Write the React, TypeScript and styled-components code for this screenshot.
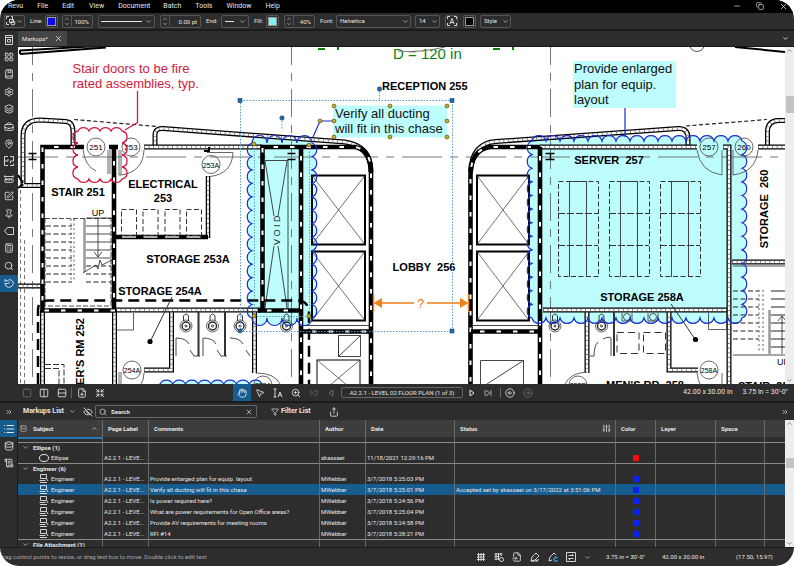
import React from "react";
import styled, { createGlobalStyle, css } from "styled-components";
import {
  BookMarked, BriefcaseBusiness, Calculator, ChevronDown, ChevronUp, ChevronsRight, CircleArrowLeft, CircleArrowRight,
  Columns2, Copy, Database, EyeOff, FileInput, FilePlus, Filter, Hand, Layers, LayoutGrid,
  List, MapPin, Minus, MousePointer2, Pin, Rows2, RulerDimensionLine, ScrollText, Search,
  Settings, Share, SkipBack, SkipForward, SlidersVertical, Square, SquareMinus, SquarePen, X, ZoomIn, Shrink,
} from "lucide-react";

const ink = "#e6e6e6";
const chrome = "#2d2d2d";
const edge = "#1b1b1b";
const accent = "#175c8f";
const cyan = "#bdfdfd";
const blue = "#1a2fd0";

const Global = createGlobalStyle`
  * { box-sizing: border-box; }
  body { margin: 0; background: #fff; font-family: Roboto, sans-serif; font-size: 7px; color: ${ink}; }
  button, input, select { font: inherit; color: inherit; margin: 0; padding: 0; border: 0; background: none; }
`;

const Shell = styled.div`
  display: flex; flex-direction: column; min-height: 100vh; background: ${chrome};
  border-radius: 19px; overflow: hidden; line-height: 1;
`;
const MenuBar = styled.nav`
  display: flex; align-items: center; height: 13px; background: #000; padding: 0 6px 0 8px;
`;
const MenuItem = styled.button<{ $gap: number }>`margin-right: ${p => p.$gap}px; white-space: nowrap;`;
const WindowButtons = styled.div`
  margin-left: auto; display: flex; gap: 15px;
  button { display: flex; }
`;
const Toolbar = styled.div`
  display: flex; align-items: center; height: 18px; padding: 0 4px; border-bottom: 2px solid ${edge}; font-size: 6px;
`;
const FieldLabel = styled.label<{ $w: number }>`
  width: ${p => p.$w}px; margin-left: 5px; flex: none; white-space: nowrap;
`;
const Box = styled.div<{ $w: number; $ml?: number }>`
  display: flex; align-items: center; height: 13px; width: ${p => p.$w}px; margin-left: ${p => p.$ml ?? 4}px;
  border: 1px solid #555; border-radius: 2px; flex: none; overflow: hidden;
  > svg { flex: none; margin: 0 1px; }
`;
const IconBox = styled(Box)`justify-content: center; > svg { margin: 0; }`;
const Value = styled.input`flex: 1; min-width: 0; height: 11px; text-align: right; padding-right: 3px;`;
const Pick = styled.select`
  appearance: none; flex: 1; min-width: 0; height: 11px; padding-left: 3px; outline: 0;
  option { color: #000; }
`;
const Swatch = styled.button<{ $c: string }>`
  width: 9px; height: 9px; margin: 0 auto; background: ${p => p.$c}; border: 1px solid #999;
`;
const Stepper = styled.div`
  display: flex; flex-direction: column; width: 9px; flex: none; border-right: 1px solid #555;
  button { display: flex; justify-content: center; height: 5px; }
`;
const Main = styled.div`display: grid; grid-template-columns: 18px minmax(0, 1fr); flex: 1;`;
const SideTools = styled.div`
  display: grid; grid-auto-rows: 1fr; height: 261px;
`;
const IconButton = styled.button<{ $on?: boolean }>`
  display: flex; align-items: center; justify-content: center;
  ${p => p.$on && css`background: ${accent};`}
`;
const Workspace = styled.main`display: flex; flex-direction: column; min-width: 0;`;
const TabStrip = styled.div`
  display: flex; align-items: stretch; justify-content: space-between; height: 16px; border-bottom: 1px solid ${edge};
  padding-right: 5px;
`;
const Tab = styled.button`
  display: flex; align-items: center; gap: 6px; width: 49px; padding-left: 4px; background: #454545; font-size: 6px;
`;
const CanvasRow = styled.div`
  display: flex; flex: 1; background: #fff;
  > svg { display: block; flex: 1; min-width: 0; }
`;
const ScrollTrack = styled.div<{ $top: number; $size: number }>`
  width: 9px; flex: none; background: #ededed; color: #444; display: flex; flex-direction: column; align-items: center;
  svg:last-child { margin-top: auto; }
  i { width: 8px; height: ${p => p.$size}px; margin-top: ${p => p.$top}px; background: #c3c3c3; }
`;
const NavBar = styled.div`
  display: flex; align-items: center; height: 17px; padding: 0 6px 0 3px; background: ${chrome};
`;
const NavButton = styled(IconButton)<{ $dim?: boolean; $w?: number }>`
  width: ${p => p.$w ?? 18}px; height: 17px; flex: none; opacity: ${p => (p.$dim ? 0.35 : 1)};
`;
const NavGroup = styled.div<{ $w?: number }>`
  display: flex; align-items: center; flex: none; ${p => p.$w && css`width: ${p.$w}px;`}
`;
const Rule = styled.span`width: 1px; height: 10px; background: #666; margin: 0 3px;`;
const PageBox = styled.button`
  width: 122px; height: 11px; margin: 0 2px; border: 1px solid #666; border-radius: 2px; font-size: 6px; white-space: nowrap;
`;
const Readouts = styled.div<{ $gap: number }>`
  display: flex; gap: ${p => p.$gap}px; margin-left: auto; white-space: nowrap; font-size: 7px;
`;
const Panel = styled.section`border-top: 2px solid ${edge};`;
const PanelHead = styled.header`display: flex; align-items: center; height: 17px;`;
const PanelTitle = styled.button`
  display: flex; align-items: center; gap: 5px; width: 58px; margin-left: 5px; font-weight: 700; white-space: nowrap;
`;
const SearchBox = styled.label`
  display: flex; align-items: center; gap: 4px; width: 162px; height: 13px; padding: 0 3px; border: 1px solid #666; border-radius: 2px;
  input { flex: 1; min-width: 0; outline: 0; font-size: 6px; }
  input::placeholder { color: ${ink}; opacity: 1; font-weight: 700; }
`;
const FilterButton = styled.button`
  display: flex; align-items: center; gap: 2px; margin: 0 18px 0 14px; font-weight: 700; white-space: nowrap;
`;
const PanelBody = styled.div`
  display: grid; grid-template-columns: 18px minmax(0, 1fr) 9px; height: 127px; overflow: hidden;
`;
const PanelTabs = styled.div`
  display: grid; grid-auto-rows: 17px; border-right: 1px solid ${edge};
`;
const TableWrap = styled.div`overflow: hidden; min-width: 0;`;
const Table = styled.table`
  width: 100%; table-layout: fixed; border-collapse: separate; border-spacing: 0; font-size: 6px;
  td, th { padding: 0; text-align: left; white-space: nowrap; overflow: hidden; border-right: 1px solid #686868; line-height: 8px; }
  td { height: 11px; padding-left: 1px; }
  th { height: 17px; padding-left: 5px; background: #3d3d3d; font-weight: 700; }
  th:first-child { padding-left: 2px; }
  td:last-child, th:last-child { border-right: 0; }
`;
const SpacerRow = styled.tr`
  && td { height: 5px; line-height: 0; }
  td:first-child { border-top: 2px solid #2478b5; }
`;
const GroupRow = styled.tr`
  && td { height: 10px; border-top: 1px solid #8a8a8a; font-weight: 700; }
`;
const ItemRow = styled.tr<{ $on?: boolean }>`
  ${p => p.$on && css`background: ${accent};`}
`;
const CellFlex = styled.div<{ $pad?: number; $gap?: number }>`
  display: flex; align-items: center; gap: ${p => p.$gap ?? 2}px; padding-left: ${p => p.$pad ?? 0}px; padding-right: 4px;
  svg { flex: none; }
`;
const Push = styled.span`margin-left: auto; display: flex;`;
const ColorDot = styled.span<{ $c: string }>`display: block; width: 6px; height: 6px; margin: 1px auto 0; background: ${p => p.$c};`;
const StatusBar = styled.footer`
  display: flex; align-items: center; height: 19px; border-top: 1px solid ${edge}; padding: 0 20px 0 3px; color: #a9a9a9;
  font-size: 6px;
`;
const StatusTools = styled.div`
  display: flex; gap: 8px; margin-left: auto; margin-right: 15px; color: ${ink}; align-items: center;
`;
const StatusText = styled.span<{ $w: number }>`width: ${p => p.$w}px; white-space: nowrap; color: ${ink};`;

/* ---------- floor plan ---------- */

const SolidWall = ({ d }: { d: string }) => (
  <g fill="none">
    <path d={d} stroke="#000" strokeWidth="4.6" />
    <path d={d} stroke="#fff" strokeWidth="2" strokeDasharray="4.5 12" strokeDashoffset="-9" />
  </g>
);
const HatchWall = ({ d, w = 5 }: { d: string; w?: number }) => (
  <g fill="none">
    <path d={d} stroke="#000" strokeWidth={w} />
    <path d={d} stroke="#fff" strokeWidth={w - 2.6} />
    <path d={d} stroke="#555" strokeWidth={w - 2.6} strokeDasharray="0.7 4" />
  </g>
);

function cloud(x: number, y: number, w: number, h: number, step: number) {
  const nx = Math.round(w / step);
  const ny = Math.round(h / step);
  const dx = w / nx;
  const dy = h / ny;
  const r = step * 0.53;
  const arc = (ax: number, ay: number, n: number) => `a${r} ${r} 0 0 1 ${ax} ${ay}`.repeat(n);
  return `M${x} ${y}${arc(dx, 0, nx)}${arc(0, dy, ny)}${arc(-dx, 0, nx)}${arc(0, -dy, ny)}z`;
}

const Door = ({ x, y, n }: { x: number; y: number; n: string }) => (
  <g>
    <circle cx={x} cy={y} r="9" fill="none" stroke="#444" strokeWidth=".8" />
    <text x={x} y={y + 3} fontSize={n.length > 3 ? 7 : 8} textAnchor="middle">{n}</text>
  </g>
);
const Toilet = ({ x, y }: { x: number; y: number }) => (
  <g fill="none" stroke="#222" strokeWidth=".9">
    <circle cx={x} cy={y} r="6" strokeWidth=".7" />
    <circle cx={x} cy={y} r="4" strokeWidth="1.4" />
    <circle cx={x} cy={y} r="1" />
    <path d={`M${x - 2.5} ${y - 5}v-5q2.5 -4 5 0v5`} />
  </g>
);
const Crossed = ({ x, y, w, h, s = 2 }: { x: number; y: number; w: number; h: number; s?: number }) => (
  <g fill="none" stroke="#000">
    <rect x={x} y={y} width={w} height={h} strokeWidth={s} />
    <path d={`M${x} ${y}l${w} ${h}M${x + w} ${y}l${-w} ${h}`} strokeWidth=".7" stroke="#333" />
  </g>
);
const Label = ({ x, y, children, start }: { x: number; y: number; children: string; start?: boolean }) => (
  <text x={x} y={y} fontWeight="700" fontSize="11" textAnchor={start ? "start" : "middle"} xmlSpace="preserve">{children}</text>
);
const treads = (x: number, w: number, y: number, n: number) =>
  Array.from({ length: n }, (_, i) => `M${x} ${y + i * 8}h${w}`).join("");

const yellowHandles = [
  [334, 106], [390, 106], [447, 106], [334, 121], [447, 121], [334, 137], [390, 137], [447, 137],
  [320, 121], [254, 144], [309, 145], [254, 316], [309, 316],
];

const FloorPlan = () => (
  <svg viewBox="18 47 767 337" preserveAspectRatio="xMinYMin slice" fontFamily='"Liberation Sans", Arial, sans-serif' role="img" aria-label="Level 02 floor plan">
    <rect x="18" y="47" width="768" height="337" fill="#fff" />
    <path d={cloud(252, 143, 60, 175, 13.5)} fill={cyan} />
    <path d={cloud(532, 141, 210, 177, 13.7)} fill={cyan} />
    <path d={cloud(160, 384, 102, 27, 13.5)} fill={cyan} stroke={blue} strokeWidth="1.2" />

    <g stroke="#666" strokeWidth=".9" fill="none">
      <path d="M32.5 47v337M291.5 47v337M550.5 47v337" strokeDasharray="28 8 8 8" strokeDashoffset="10" />
      <path d="M18 157H786" strokeDasharray="40 8 8 8" />
      <path d="M74 119.5L157 126.5M686 126L767 119.5" stroke="#222" strokeDasharray="4 2.5" strokeWidth="1.2" />
      <path d="M20.5 190v194M24.5 240v144" strokeDasharray="4 3" />
    </g>
    <path d="M20 50.500L98 46M20 54L106 47.500M735 47L786 52M20 50v4" stroke="#000" strokeWidth="2" fill="none" />
    <path d="M28.500 153.500h8M28.500 159.500h8M32.500 153.500v6M287.500 153.500h8M287.500 159.500h8M545.500 153.500h9M545.500 159.500h9M550.500 153.500v6" stroke="#000" strokeWidth="1.3" />
    <circle cx="697" cy="44" r="7.500" fill="none" stroke="#555" />

    {/* curved party walls */}
    <HatchWall d="M42 185.500H23V136Q23 120 40 120L66 121.500Q73 122 73 131V146" />
    <HatchWall d="M155 146V135Q155 128 163 128.500L345 142Q371 146 371 172" />
    <HatchWall d="M470.500 172Q472 143 496 141.500L678 128.500Q688 128 688 138V146" />
    <HatchWall d="M767.500 146V131Q768 121 778 120.500H787" />
    <path d="M18 175l5 8M18 188l5 -4" stroke="#000" strokeWidth="2" />

    {/* hatched partitions */}
    <HatchWall d="M144 147H262" />
    <HatchWall d="M540 147H697" />
    <HatchWall d="M758 147H787" />
    <HatchWall d="M208 176V238" w={4.5} />
    <path d="M204 151h5v-4" stroke="#000" strokeWidth="2" fill="none" />
    <path d="M116 237H208" stroke="#000" strokeWidth="4.500" />
    <path d="M117 237H208" stroke="#aaa" strokeWidth="2" strokeDasharray="14 7.500" strokeDashoffset="-5" />
    <HatchWall d="M18 286H41" />
    <HatchWall d="M116 310H260" />
    <HatchWall d="M42.500 310V384" />
    <HatchWall d="M114.500 310V384" />
    <HatchWall d="M171.500 312V370H144" />
    <HatchWall d="M254.500 312V373" />
    <HatchWall d="M543 310H729" />
    <HatchWall d="M587 312V373" />
    <HatchWall d="M669 312V370H698" />
    <HatchWall d="M723 147H729V384" />
    <HatchWall d="M732 262H787" />

    {/* structural walls */}
    <SolidWall d="M84 147H42.500V310.500H114V147" />
    <path d="M109 147h9" stroke="#000" strokeWidth="4.600" />
    <SolidWall d="M262.500 310V147H355Q371 150 371 172V384" />
    <SolidWall d="M258 310.500H301" />
    <SolidWall d="M301 147V384" />
    <SolidWall d="M303 331.500H371" />
    <SolidWall d="M540 147H490Q471 150 470.500 175V384" />
    <SolidWall d="M540 147V384" />
    <SolidWall d="M471 331.500H540" />

    {/* lift shafts */}
    <Crossed x={312} y={175.500} w={53} h={69} />
    <Crossed x={312} y={251.500} w={53} h={69} />
    <Crossed x={477} y={175.500} w={52} h={69} />
    <Crossed x={477} y={251.500} w={52} h={69} />
    <Crossed x={317} y={360} w={43} h={36} s={1} />
    <g stroke="#333" strokeWidth=".9" fill="none">
      <path d="M303 325.500H369M473 325.500H538M338.500 335.500h22v21h-22zl0 21L360.500 335.500M480.500 360.500h43v36M480.500 384V360.500M487 384L523.500 360.500" />
      <path d="M264 160.500H288V308M265 161L274 216M287 161L278 216M274 246L265 308M278 246L287 308" />
    </g>
    <text transform="translate(280 245) rotate(-90)" fontSize="9" fill="#222" xmlSpace="preserve">V O I D</text>

    {/* stair flights */}
    <g fill="none" stroke="#222" strokeWidth="1.200">
      <path d="M45 218.500H112M45 218V306H111V218" strokeWidth=".8" strokeDasharray="5 2" />
      <path d={treads(46, 26, 226, 8)} strokeDasharray="5 2.500" />
      <path d={treads(86, 25, 218, 6)} strokeWidth=".8" />
      <path d={treads(86, 25, 266, 3)} strokeDasharray="5 2.500" />
      <path d="M71 219V282M74 219V282" strokeDasharray="2 2.500" stroke="#777" />
      <path d="M84.500 219V272" stroke="#999" strokeWidth="2.500" />
      <path d="M98 218V257M94 252l4 5l4 -5M83 273L96 265l2 4l2 -9l2 5L112 260" strokeWidth=".8" />
      <path d={treads(733, 26, 291, 7)} strokeDasharray="5 2.500" />
      <path d={treads(771, 15, 291, 8)} strokeWidth="1" />
      <path d="M759 290V353M763 290V353" strokeDasharray="2 2.500" stroke="#777" />
      <path d="M769.500 310V354" stroke="#999" strokeWidth="2.500" />
      <path d="M733 355H786M782 354V316M778 321l4 -5l4 5M733 266H786" strokeWidth=".8" />
    </g>
    <text x="98" y="215.500" fontSize="9" textAnchor="middle">UP</text>
    <text x="777" y="365" fontSize="9">UP</text>

    {/* furniture */}
    <g fill="none" stroke="#333" strokeWidth="1">
      {[121.500, 143, 165, 186.500].map(x => <rect key={x} x={x} y="209.500" width="15" height="26" strokeDasharray="5 2.500" />)}
      {[558, 609, 660].map(x => (
        <g key={x}>
          <rect x={x + .5} y="181.500" width="40" height="95" strokeDasharray="5 2.500" />
          <path d={`M${x} 213.500h40M${x} 245.500h40`} strokeDasharray="7 2" />
          <path d={`M${x + 11.500} 181V277M${x + 28.500} 181V277M${x + 11} 181.500h17`} strokeWidth=".9" />
        </g>
      ))}
      <path d="M617 332.500h22v21h-22zM643.500 332.500h22v21h-22z" strokeDasharray="7 4" />
      <path d="M45 364.500h19V384M45 368.500h14V384" strokeDasharray="6 2" />
      <path d="M116 330H133.500V313M708.500 313v16.500h18v-16" strokeWidth=".8" />
      <path d="M198.500 312V356M225 312V356M614 312V356" strokeWidth="2" />
      <path d="M176 356V338q10 0 13 6M190 350l4 6h6M203 356V338q10 0 13 6M217 350l4 6h6M230 338q10 0 13 6M246 350l4 6M590 356h4q0 -10 4 -14M603 339q6 -3 8 -1V356" strokeWidth=".9" />
    </g>
    {[[186, 326], [212.500, 326], [240, 326], [286.500, 326], [555, 326], [601.500, 326]].map(([x, y]) => <Toilet key={x} x={x} y={y} />)}
    <g fill="none" stroke="#555">
      <circle cx="627" cy="317" r="3.500" /><circle cx="653" cy="317" r="3.500" />
      <path d="M622 313v8h10v-8M648 313v8h10v-8" />
    </g>

    {/* doors */}
    <g fill="none" stroke="#555" strokeWidth=".9">
      <path d="M83 150Q85 166 96 171M108 150v24M110 150v24M119 150v25h2v-25M144 150Q143 172 121 175M207 152.500H233Q232 174 210 176.500" />
      <path d="M697 150Q700 172 722 175V150M733 150V175Q756 172 758 150M144 373Q144 380 141 384M119 372v12M121 372v12M256 373Q275 373 280 384M565 384Q570 373 587 372M697 373Q698 380 700 384M722 373v11" />
    </g>
    <Door x={96} y={147} n="251" />
    <Door x={131} y={147} n="253" />
    <Door x={211} y={164.500} n="253A" />
    <Door x={132} y={370} n="254A" />
    <Door x={709} y={147} n="257" />
    <Door x={744} y={147} n="260" />
    <Door x={709} y={370} n="258A" />
    <Door x={578} y={385} n="252B" />
    <Door x={263} y={385} n="252A" />

    {/* overhead line */}
    <path d="M38 384V310Q38 300.500 48 300.500H298Q309 301 309 314V384" fill="none" stroke="#000" strokeWidth="2.500" strokeDasharray="11 6" />

    {/* room names */}
    <Label x={78} y={196}>STAIR 251</Label>
    <Label x={163} y={188}>ELECTRICAL</Label>
    <Label x={163} y={202}>253</Label>
    <Label x={188} y={263}>STORAGE 253A</Label>
    <Label x={160} y={295}>STORAGE 254A</Label>
    <Label x={382} y={90} start>RECEPTION 255</Label>
    <Label x={424} y={271}>LOBBY  256</Label>
    <Label x={609} y={164}>SERVER  257</Label>
    <Label x={642} y={301}>STORAGE 258A</Label>
    <Label x={645} y={389}>MEN'S RR  258</Label>
    <Label x={738} y={390} start>STAIR  259</Label>
    <g transform="translate(84 353) rotate(-90)"><Label x={0} y={0}>IER'S RM 252</Label></g>
    <g transform="translate(768 209) rotate(-90)"><Label x={0} y={0}>STORAGE  260</Label></g>
    <path d="M150 342L172 297M695 339L671 304" stroke="#333" />
    <circle cx="150" cy="341.500" r="2.600" /><circle cx="695.500" cy="339.500" r="2.600" />

    {/* markups */}
    <g fill="#0a820a">
      <text x="393" y="58.500" fontSize="15">D = 120 in</text>
      <path d="M318 48h7v2h-7zM337 47h2v3h-2zM493 48h7v2h-7zM512 47h2v3h-2z" />
    </g>
    <path d="M398 51Q420 53 445 47" fill="none" stroke="#777" />
    <g fill="none" stroke={blue} strokeWidth="1.200">
      <path d={cloud(252, 143, 60, 175, 13.5)} />
      <path d={cloud(532, 141, 210, 177, 13.7)} />
      <path d="M334 121H320L313 137M625 108V137" />
    </g>
    <g fill="none" stroke="#d21a3c" strokeWidth="1.300">
      <path d={cloud(78, 131, 44, 48, 11.500)} />
      <path d="M137.500 91V122.500L125 130" />
    </g>
    <g fill="#d21a3c" fontSize="13">
      <text x="72.500" y="73">Stair doors to be fire</text>
      <text x="72.500" y="88">rated assemblies, typ.</text>
    </g>
    <rect x="333" y="105.500" width="114" height="32" fill={cyan} />
    <rect x="573" y="61" width="103" height="47" fill={cyan} />
    <g fill="#111" fontSize="13">
      <text x="335" y="118">Verify all ducting</text>
      <text x="335" y="133">will fit in this chase</text>
      <text x="574" y="73">Provide enlarged</text>
      <text x="574" y="88.500">plan for equip.</text>
      <text x="574" y="104">layout</text>
    </g>
    <g fill="none" stroke="#5b9cc4" strokeWidth="1" strokeDasharray="1.500 1.500">
      <path d="M240.500 100.500H452.500V331.500H240.500zM379.500 89V100M282 118V130" />
      <path d="M254.500 145V316.500H309.500V145" />
    </g>
    <g fill="#1f6aa5" stroke="#144a78" strokeWidth=".6">
      {[[240, 100.500], [452, 100.500], [452, 331]].map(([x, y]) => <rect key={`${x}${y}`} x={x - 2} y={y - 2} width="4" height="4" />)}
      <circle cx="240" cy="331" r="2" /><circle cx="379.500" cy="89" r="2.200" /><circle cx="282" cy="118" r="2.200" />
    </g>
    <g fill="#c9b22c" stroke="#5e5515" strokeWidth=".8">
      {yellowHandles.map(([x, y]) => <circle key={`${x}-${y}`} cx={x} cy={y} r="1.900" />)}
    </g>
    <g fill="#f08019" stroke="none">
      <path d="M373.500 303L382 298V308zM468.500 303L460 298V308z" />
      <path d="M380 303H414M427 303H462M373.500 294V312M468.500 294V312" stroke="#f08019" strokeWidth="1.500" />
      <text x="420.500" y="308" fontSize="13" textAnchor="middle">?</text>
    </g>
  </svg>
);

/* ---------- chrome ---------- */

const ico = { size: 10, strokeWidth: 2 } as const;
const tiny = { size: 7, strokeWidth: 2 } as const;

const Glyph = ({ d, fill }: { d: string; fill?: string }) => (
  <svg width="10" height="10" viewBox="0 0 10 10" fill="none" stroke="currentColor" strokeWidth=".9">
    <path d={d} />
    {fill && <path d={fill} fill="currentColor" stroke="none" />}
  </svg>
);
const glyphs = {
  file: "M1.500 .5h7v9h-7zM1.500 2.500h7M3.500 4.500h3v2.500h-3z",
  plan: "M4 .5H.5v9H4M.5 5H4V3M6 .5h3.500V5H6.500v2M6 9.500h3.500V7.500",
  tag: "M.5 5L3.500 1.500H9.500V8.500H3.500z",
  studio: "M1 4V1.500L3 3Q6 0 8.500 3T7.500 8.500 2 8 1 5.500H4L6 4",
  shape: "M.5 3V.5H3M5 .5h1.500V3M.5 6v2.500H3M3.500 3.500h4v3h-4zM9 7a2 2 0 1 1 -4 0a2 2 0 1 1 4 0",
  autosize: "M.5 3V.5H3M7 .5h2.500V3M.5 7v2.500H3M7 9.500h2.500V7M3 8L5 2.500L7 8M3.700 6.500h2.600",
  textSelect: "M.5 1h3M2 1v8M.5 9h3M5 9L7 4l2 5M6 7h2",
  grid: "M2.500 1v8M5 1v8M7.500 1v8M1 2.500h8M1 5h8M1 7.500h8",
  snapGrid: "M2 1v7M4.500 1v7M7 1v3M.5 2h8M.5 4.500h5M.5 7h4M9.500 7.500a2 2 0 1 1 -4 0a2 2 0 1 1 4 0",
  snapMark: "M1 9L2 5L6 1L9 4L5 8zM1 9H8M8.500 7a1.500 1.500 0 1 1 -3 0",
  reuse: "M1 9L2 5L6 1L8 3M1 9L4 8",
  frame: "M.5 .5h9v9h-9zM2.500 3.500h5L6 2M7.500 6.500h-5L4 8",
};

const Play = ({ back }: { back?: boolean }) => (
  <svg width="6" height="8" viewBox="0 0 6 8" fill="none" stroke="currentColor"><path d={back ? "M5 1L1 4l4 3z" : "M1 1l4 3l-4 3z"} /></svg>
);
const Callout = () => (
  <svg width="10" height="9" viewBox="0 0 10 9" fill="none" stroke="currentColor" strokeWidth=".9"><path d="M1.500 .5h6v4h-6zM.5 6.500h6M1 8.500h7M7.500 4.500l1.500 2.500" /></svg>
);

const menus: [string, number][] = [
  ["Revu", 14], ["File", 14], ["Edit", 15], ["View", 14], ["Document", 13], ["Batch", 14], ["Tools", 14], ["Window", 14], ["Help", 0],
];
const sideTools: [string, React.ReactNode][] = [
  ["File access", <Glyph d={glyphs.file} />], ["Thumbnails", <LayoutGrid {...ico} />], ["Bookmarks", <BookMarked {...ico} />],
  ["Properties", <Settings {...ico} />], ["Layers", <Layers {...ico} />], ["Tool chest", <BriefcaseBusiness {...ico} />],
  ["Places", <MapPin {...ico} />], ["Spaces", <Glyph d={glyphs.plan} />], ["Measurements", <RulerDimensionLine {...ico} />],
  ["Forms", <SquarePen {...ico} />], ["Signatures", <Pin {...ico} />], ["Flags", <Glyph d={glyphs.tag} />],
  ["Sets", <Calculator {...ico} />], ["Search", <Search {...ico} />], ["Studio", <Glyph d={glyphs.studio} />],
];

const Steps = ({ name }: { name: string }) => (
  <Stepper>
    <button aria-label={`Increase ${name}`}><ChevronUp size={6} /></button>
    <button aria-label={`Decrease ${name}`}><ChevronDown size={6} /></button>
  </Stepper>
);

const rows = [
  ["Provide enlarged plan for equip. layout", "3/7/2018 5:25:03 PM"],
  ["Verify all ducting will fit in this chase", "3/7/2018 5:25:01 PM"],
  ["Is power required here?", "3/7/2018 5:24:56 PM"],
  ["What are power requirements for Open Office areas?", "3/7/2018 5:25:04 PM"],
  ["Provide AV requirements for meeting rooms", "3/7/2018 5:24:58 PM"],
  ["RFI #14", "3/7/2018 5:28:21 PM"],
];
const Col = styled.col<{ $w: number }>`${p => p.$w > 0 && css`width: ${p.$w}px;`}`;
const widths = [85, 46, 0, 46, 89, 161, 40, 60, 49, 20];

const Group = ({ children }: { children: React.ReactNode }) => (
  <GroupRow>
    <td><CellFlex $pad={3} $gap={4}><ChevronDown {...tiny} /> {children}</CellFlex></td>
    {widths.slice(1).map((_, i) => <td key={i} />)}
  </GroupRow>
);
const Item = ({ icon, subject, comment, author, date, status, color, on }: {
  icon: React.ReactNode; subject: string; comment: string; author: string; date: string; status?: string; color: string; on?: boolean;
}) => (
  <ItemRow $on={on}>
    <td><CellFlex $pad={20}>{icon}{subject}</CellFlex></td>
    <td>A2.2.1 - LEVE...</td><td>{comment}</td><td>{author}</td><td>{date}</td><td>{status}</td>
    <td><ColorDot $c={color} /></td><td /><td /><td />
  </ItemRow>
);

export default function App() {
  return (
    <Shell>
      <Global />
      <MenuBar>
        {menus.map(([m, g]) => <MenuItem key={m} $gap={g}>{m}</MenuItem>)}
        <WindowButtons>
          <button aria-label="Minimize"><Minus size={8} /></button>
          <button aria-label="Restore"><Copy size={8} /></button>
          <button aria-label="Close"><X size={9} /></button>
        </WindowButtons>
      </MenuBar>

      <Toolbar>
        <IconBox as="button" $w={21} $ml={0} aria-label="Tool presets"><Glyph d={glyphs.shape} /><ChevronDown {...tiny} /></IconBox>
        <FieldLabel htmlFor="line" $w={13}>Line:</FieldLabel>
        <Box $w={13} $ml={2}><Swatch id="line" $c="#0a0af0" /></Box>
        <Box $w={31}><Steps name="opacity" /><Value aria-label="Line opacity" defaultValue="100%" /></Box>
        <IconBox as="button" $w={57} $ml={5} aria-label="Line style">
          <svg width="44" height="3" viewBox="0 0 44 3"><path d="M0 1.500h41" stroke="#e6e6e6" /></svg>
          <ChevronDown {...tiny} />
        </IconBox>
        <Box $w={41} $ml={5}><Steps name="width" /><Value aria-label="Line width" defaultValue="0.00 pt" /></Box>
        <FieldLabel htmlFor="end" $w={13}>End:</FieldLabel>
        <IconBox as="button" id="end" $w={28} $ml={2}>
          <svg width="15" height="3" viewBox="0 0 15 3"><path d="M1 1.500h9" stroke="#e6e6e6" /></svg>
          <ChevronDown {...tiny} />
        </IconBox>
        <FieldLabel htmlFor="fill" $w={10}>Fill:</FieldLabel>
        <Box $w={13} $ml={2}><Swatch id="fill" $c="#7ff3f3" /></Box>
        <Box $w={31} $ml={5}><Steps name="fill" /><Value aria-label="Fill opacity" defaultValue="40%" /></Box>
        <FieldLabel htmlFor="font" $w={14}>Font:</FieldLabel>
        <Box $w={75} $ml={2}><Pick id="font"><option>Helvetica</option></Pick><ChevronDown {...tiny} /></Box>
        <Box $w={25}><Pick aria-label="Font size"><option>14</option></Pick><ChevronDown {...tiny} /></Box>
        <IconBox as="button" $w={13} $ml={5} aria-label="Autosize text"><Glyph d={glyphs.autosize} /></IconBox>
        <Box $w={13} $ml={5}><Swatch $c="#000" aria-label="Text color" /></Box>
        <Box $w={31}><Pick aria-label="Style"><option>Style</option></Pick><ChevronDown {...tiny} /></Box>
      </Toolbar>

      <Main>
        <SideTools>
          {sideTools.map(([n, icon]) => <IconButton key={n} aria-label={n} $on={n === "Studio"}>{icon}</IconButton>)}
        </SideTools>
        <Workspace>
          <TabStrip>
            <Tab>Markups* <X size={9} /></Tab>
            <IconButton aria-label="More tabs"><ChevronDown size={7} strokeWidth={3} /></IconButton>
          </TabStrip>
          <CanvasRow>
            <FloorPlan />
            <ScrollTrack $top={42} $size={17}><ChevronUp {...tiny} /><i /><ChevronDown {...tiny} /></ScrollTrack>
          </CanvasRow>
          <NavBar>
            <NavGroup $w={212}>
              <NavButton $w={11} $dim aria-label="Single view"><Square {...ico} /></NavButton>
              <NavButton $w={24} aria-label="Split vertical"><Columns2 {...ico} /></NavButton>
              <NavButton $w={12} aria-label="Split horizontal"><Rows2 {...ico} /></NavButton>
              <Rule />
              <NavButton $w={14} aria-label="Sync page"><FilePlus {...ico} /></NavButton>
              <NavButton $w={22} aria-label="Fit view"><Shrink {...ico} /></NavButton>
            </NavGroup>
            <NavGroup>
              <NavButton $on aria-label="Pan"><Hand {...ico} /></NavButton>
              <NavButton aria-label="Select"><MousePointer2 {...ico} /></NavButton>
              <NavButton aria-label="Select text"><Glyph d={glyphs.textSelect} /></NavButton>
              <NavButton aria-label="Zoom"><ZoomIn {...ico} /></NavButton>
              <NavButton $dim aria-label="First page"><SkipBack size={8} /></NavButton>
              <NavButton $w={16} $dim aria-label="Previous page"><Play back /></NavButton>
              <PageBox>A2.2.1 - LEVEL 02 FLOOR PLAN (1 of 3)</PageBox>
              <NavButton $w={14} aria-label="Next page"><Play /></NavButton>
              <NavButton aria-label="Last page"><SkipForward size={8} /></NavButton>
              <Rule />
              <NavButton $w={12} aria-label="Previous view"><CircleArrowLeft {...ico} /></NavButton>
              <NavButton $w={24} $dim aria-label="Next view"><CircleArrowRight {...ico} /></NavButton>
            </NavGroup>
            <Readouts $gap={10}><span>42.00 x 30.00 in</span><span>3.75 in = 30'-0"</span></Readouts>
          </NavBar>
        </Workspace>
      </Main>

      <Panel>
        <PanelHead>
          <NavButton aria-label="Collapse"><ChevronsRight size={8} /></NavButton>
          <PanelTitle>Markups List <ChevronDown {...tiny} /></PanelTitle>
          <NavButton $w={14} aria-label="Hide markups"><EyeOff {...ico} /></NavButton>
          <SearchBox>
            <Search size={8} />
            <input placeholder="Search" aria-label="Search markups" />
            <X size={8} />
          </SearchBox>
          <FilterButton><Filter size={8} /> Filter List</FilterButton>
          <IconButton aria-label="Export"><Share {...ico} /></IconButton>
          <Readouts $gap={0}><NavButton aria-label="Expand"><ChevronsRight size={8} /></NavButton></Readouts>
        </PanelHead>
        <PanelBody>
          <PanelTabs>
            <IconButton $on aria-label="Markups"><List size={12} /></IconButton>
            <IconButton aria-label="Model"><Database {...ico} /></IconButton>
            <IconButton aria-label="Scripts"><ScrollText {...ico} /></IconButton>
          </PanelTabs>
          <TableWrap>
            <Table>
              <colgroup>{widths.map((w, i) => <Col key={i} $w={w} />)}</colgroup>
              <thead>
                <tr>
                  <th><CellFlex $gap={6}><SquareMinus size={7} />Subject<Push><ChevronUp {...tiny} /></Push></CellFlex></th>
                  <th>Page Label</th><th>Comments</th><th>Author</th><th>Date</th>
                  <th><CellFlex>Status<Push><SlidersVertical size={9} /></Push></CellFlex></th>
                  <th>Color</th><th>Layer</th><th>Space</th><th />
                </tr>
              </thead>
              <tbody>
                <SpacerRow>{widths.map((_, i) => <td key={i} />)}</SpacerRow>
                <Group>Ellipse (1)</Group>
                <Item icon={<svg width="10" height="8" viewBox="0 0 10 8"><ellipse cx="5" cy="4" rx="4.500" ry="3.500" fill="none" stroke="currentColor" /></svg>}
                  subject="Ellipse" comment="" author="skassaei" date="11/18/2021 12:29:16 PM" color="#f30d0d" />
                <Group>Engineer (6)</Group>
                {rows.map(([c, d], i) => (
                  <Item key={d} icon={<Callout />} subject="Engineer" comment={c} author="MWebber" date={d} color="#0b22f2" on={i === 1}
                    status={i === 1 ? "Accepted set by skassaei on 3/17/2022 at 3:51:06 PM" : undefined} />
                ))}
                <Group>File Attachment (1)</Group>
              </tbody>
            </Table>
          </TableWrap>
          <ScrollTrack $top={31} $size={10}><ChevronUp {...tiny} /><i /><ChevronDown {...tiny} /></ScrollTrack>
        </PanelBody>
      </Panel>

      <StatusBar>
        <span>rag control points to resize, or drag text box to move. Double click to edit text</span>
        <StatusTools>
          <IconButton aria-label="Grid"><Glyph d={glyphs.grid} /></IconButton>
          <IconButton aria-label="Snap to grid"><Glyph d={glyphs.snapGrid} /></IconButton>
          <IconButton aria-label="Snap to content"><FileInput {...ico} /></IconButton>
          <IconButton aria-label="Snap to markup"><Glyph d={glyphs.snapMark} /></IconButton>
          <IconButton aria-label="Reuse">
            <svg width="10" height="10" viewBox="0 0 10 10" fill="none" stroke="currentColor" strokeWidth=".9">
              <path d={glyphs.reuse} /><path d="M9.500 6a2 2 0 1 0 0 2.500" stroke="#2f9be0" strokeWidth="1.300" />
            </svg>
          </IconButton>
          <IconButton aria-label="Dimensions"><Glyph d={glyphs.frame} /></IconButton>
          <ChevronDown {...tiny} />
        </StatusTools>
        <StatusText $w={56}>3.75 in = 30'-0"</StatusText>
        <StatusText $w={74}>42.00 x 30.00 in</StatusText>
        <StatusText $w={38}>(17.50, 15.97)</StatusText>
      </StatusBar>
    </Shell>
  );
}
